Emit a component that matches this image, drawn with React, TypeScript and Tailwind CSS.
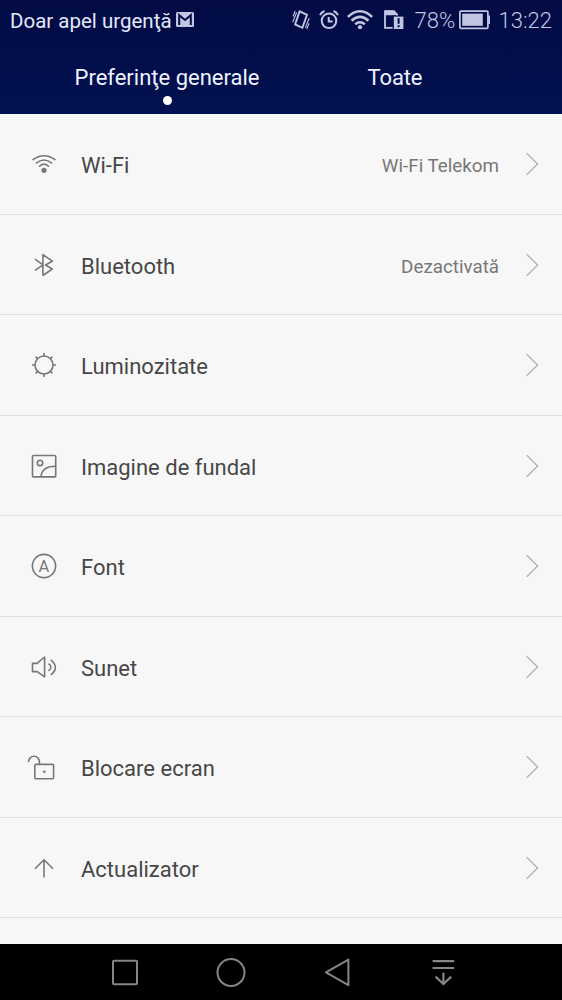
import React from 'react';

interface SettingItem {
  label: string;
  value?: string;
  icon: React.ReactNode;
}

const SETTINGS: SettingItem[] = [
  {
    label: 'Wi-Fi',
    value: 'Wi-Fi Telekom',
    icon: (
      <>
        <path d="M4.6 12Q16 3.4 27.4 12M7.9 15.4Q16 8.6 24.1 15.4M11.1 18.6Q16 13.8 20.9 18.6" />
        <circle cx="16" cy="22.3" r="2.6" fill="currentColor" stroke="none" />
      </>
    ),
  },
  {
    label: 'Bluetooth',
    value: 'Dezactivată',
    icon: <path d="M7 10.2L15 15.9L7 21.4M14.9 26.5V5.6L24.3 12.2L17.5 16L24.3 20L14.9 26.5" />,
  },
  {
    label: 'Luminozitate',
    icon: (
      <>
        <circle cx="16" cy="16" r="9" />
        <path d="M16 7V4M16 25v3M7 16H4M25 16h3M9.6 9.6L7.5 7.5M22.4 9.6l2.1-2.1M9.6 22.4l-2.1 2.1M22.4 22.4l2.1 2.1" />
      </>
    ),
  },
  {
    label: 'Imagine de fundal',
    icon: (
      <>
        <rect x="4.5" y="5.5" width="23.2" height="21.4" rx="1" />
        <circle cx="12" cy="12.9" r="2.7" />
        <path d="M12.9 26.9C13.5 20 19 16.2 27.6 16.2" />
      </>
    ),
  },
  {
    label: 'Font',
    icon: (
      <>
        <circle cx="16" cy="16" r="11.6" />
        <text x="16" y="21.6" textAnchor="middle" fontSize="16.5" fill="currentColor" stroke="none">A</text>
      </>
    ),
  },
  {
    label: 'Sunet',
    icon: (
      <path d="M4.5 12.4H9L16.6 6V25.8L9.2 20.6H4.5ZM20.5 12.6Q25.3 16.2 20.5 19.8M22.8 8.9Q32 16.4 22.8 23.8" />
    ),
  },
  {
    label: 'Blocare ecran',
    icon: (
      <>
        <rect x="6.8" y="13.4" width="18.8" height="14.4" rx="1" />
        <path d="M0.6 11.2V10.4A5.3 5 0 0 1 11.4 10.4V13.4" />
        <circle cx="16.3" cy="20.7" r="1.3" fill="currentColor" stroke="none" />
      </>
    ),
  },
  {
    label: 'Actualizator',
    icon: <path d="M16 25.5V7.9M7 16.7L16 7.7L25 16.7" />,
  },
];

const StatusBar: React.FC = () => (
  <div className="flex h-10 items-center px-[10px] text-[#c3c6e2]">
    <span className="pt-px text-[20.5px] leading-10 text-[#e4e8fb] whitespace-nowrap">Doar apel urgenţă</span>
    <svg className="ml-[4px] mb-[1px] h-[15px] w-[18px] shrink-0" viewBox="0 0 18 15">
      <rect width="18" height="15" rx="1.5" fill="currentColor" />
      <path d="M3.2 13V3.2L9 8L14.8 3.2V13" fill="none" stroke="#020c48" strokeWidth="2" />
    </svg>
    <div className="ml-auto flex items-center">
      {/* vibrate */}
      <svg className="h-5 w-[18px]" viewBox="0 0 18 20" fill="none" stroke="currentColor" strokeWidth="1.9">
        <path d="M7.6 1.4L15 4.8L10.4 17.8L3.1 14.4Z" />
        <path d="M1 6.5L3.2 1M0.8 12L4.6 2.5M13.4 17.8L17.2 8.3M14.8 19L17.1 13.4" strokeWidth="1.1" />
      </svg>
      {/* alarm */}
      <svg className="ml-[9px] h-5 w-5" viewBox="0 0 20 20" fill="none" stroke="currentColor" strokeWidth="2">
        <circle cx="10" cy="10.8" r="7.3" />
        <path d="M9.7 7V11.4H13.6" />
        <path d="M1 5.2Q2.4 2.1 5.5 1M19 5.2Q17.6 2.1 14.5 1" />
      </svg>
      {/* wifi */}
      <svg className="ml-2 h-5 w-[26px]" viewBox="0 0 26 20" fill="none" stroke="currentColor" strokeWidth="2.5">
        <path d="M0.8 6.9Q13-4.3 25.2 6.9M4.6 10.7Q13 3.1 21.4 10.7M8.2 14.3Q13 10.1 17.8 14.3" />
        <circle cx="13" cy="17.2" r="2.1" fill="currentColor" stroke="none" />
      </svg>
      {/* sim card warning */}
      <svg className="ml-[11px] h-5 w-5" viewBox="0 0 20 20">
        <path d="M1 1.2H9.8L13 4.6V17.8H1Z" fill="none" stroke="currentColor" strokeWidth="1.8" />
        <path d="M1 0.5H10.2L13.6 4V5.2H1Z" fill="currentColor" />
        <path d="M8.6 5.6H20V19H8.6Z" fill="#020c48" />
        <path d="M9.8 6.6H19.4V19H9.8Z" fill="currentColor" />
        <path d="M14.6 8.2V13.7M14.6 15.2V17.2" stroke="#020c48" strokeWidth="2" />
      </svg>
      <span className="ml-[11px] w-[42px] pt-px text-[22px] font-light leading-10">78%</span>
      <svg className="ml-[2px] h-[20px] w-[32px]" viewBox="0 0 32 20">
        <rect x="0.9" y="1.1" width="28" height="17.2" rx="1" fill="none" stroke="currentColor" strokeWidth="1.7" />
        <rect x="3.2" y="3.6" width="20.6" height="12.2" fill="currentColor" />
        <path d="M29.2 5.5H31V14H29.2Z" fill="currentColor" />
      </svg>
      <span className="ml-[8px] pt-px text-[22px] font-light leading-10">13:22</span>
    </div>
  </div>
);

const SettingRow: React.FC<{ item: SettingItem }> = ({ item }) => (
  <div className="flex h-[100.5px] shrink-0 items-center border-b border-[#dedede] pl-7 pr-[22px] pt-px">
    <svg
      className="h-8 w-8 shrink-0 overflow-visible text-[#777777]"
      viewBox="0 0 32 32"
      fill="none"
      stroke="currentColor"
      strokeWidth="1.6"
      strokeLinejoin="round"
    >
      {item.icon}
    </svg>
    <span className="ml-[21px] pt-[4px] text-[22px] leading-8 text-[#474747]">{item.label}</span>
    {item.value && (
      <span className="ml-auto pt-[4px] text-[18.8px] leading-8 text-[#777777]">{item.value}</span>
    )}
    <svg
      className={`h-6 w-[14px] shrink-0 ${item.value ? 'ml-[27px]' : 'ml-auto'}`}
      viewBox="0 0 14 24"
      fill="none"
      stroke="#b4b4b4"
      strokeWidth="1.4"
    >
      <path d="M0.7 1.2L11.6 12L0.7 22.8" />
    </svg>
  </div>
);

const NavBar: React.FC = () => (
  <div className="flex h-14 shrink-0 bg-black pl-[72px] text-[#858585]">
    <div className="flex w-[106px] items-center justify-center">
      <svg className="h-8 w-8" viewBox="0 0 32 32" fill="none" stroke="currentColor" strokeWidth="2">
        <rect x="4" y="4.7" width="24" height="23.6" rx="1" />
      </svg>
    </div>
    <div className="flex w-[106px] items-center justify-center">
      <svg className="h-8 w-8" viewBox="0 0 32 32" fill="none" stroke="currentColor" strokeWidth="2">
        <circle cx="16" cy="16.5" r="13.5" />
      </svg>
    </div>
    <div className="flex w-[106px] items-center justify-center">
      <svg className="h-8 w-8" viewBox="0 0 32 32" fill="none" stroke="currentColor" strokeWidth="2" strokeLinejoin="round">
        <path d="M4.9 16.4L27.4 3.6V29.2Z" />
      </svg>
    </div>
    <div className="flex w-[106px] items-center justify-center">
      <svg className="h-8 w-8" viewBox="0 0 32 32" fill="none" stroke="currentColor" strokeWidth="2.2">
        <path d="M5.6 5.2H27.2M5.6 12H27.2" />
        <path d="M16.4 16.8V28M8.6 20.6L16.4 28L24.2 20.6" />
      </svg>
    </div>
  </div>
);

const App: React.FC = () => (
  <div className="flex h-[1000px] w-[562px] flex-col overflow-hidden bg-[#f7f7f7] font-[Roboto,sans-serif]">
    <header className="h-[114px] shrink-0 bg-linear-to-b from-[#020b44] to-[#021150]">
      <StatusBar />
      <div className="flex text-[22px] leading-8 text-[#eef2ff]">
        <div className="ml-[75px] flex w-[184px] flex-col items-center pt-[22px]">
          <span className="whitespace-nowrap">Preferinţe generale</span>
          <span className="mt-[2px] h-[9px] w-[9px] rounded-full bg-white" />
        </div>
        <span className="ml-[108.5px] pt-[22px] tracking-[-0.1px]">Toate</span>
      </div>
    </header>

    <main className="flex min-h-0 flex-1 flex-col overflow-hidden">
      {SETTINGS.map(item => (
        <SettingRow key={item.label} item={item} />
      ))}
    </main>

    <NavBar />
  </div>
);

export default App;
